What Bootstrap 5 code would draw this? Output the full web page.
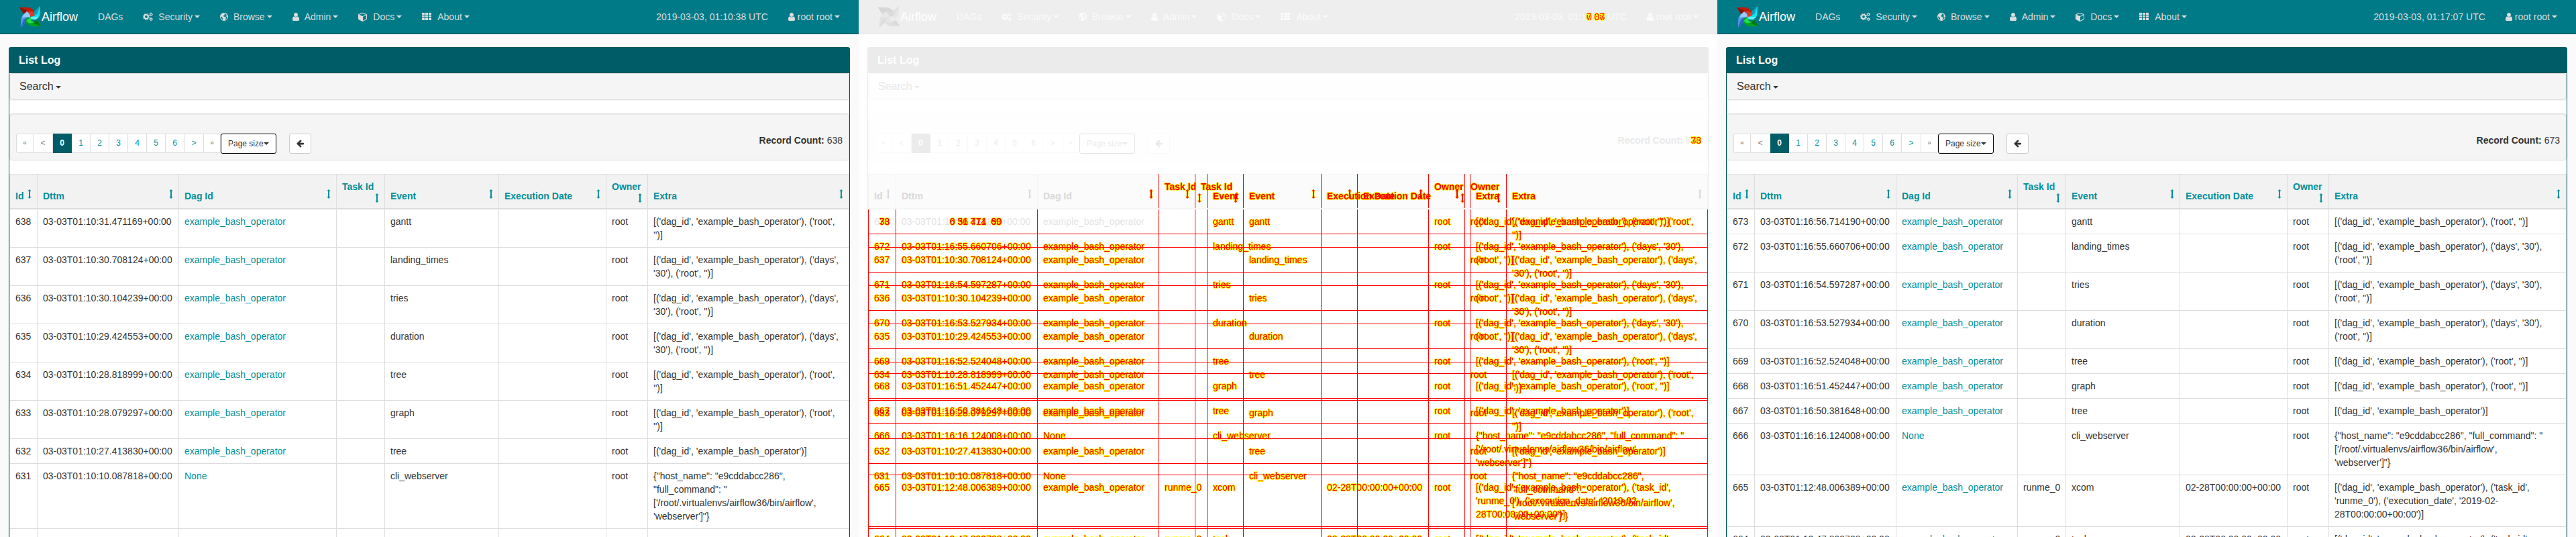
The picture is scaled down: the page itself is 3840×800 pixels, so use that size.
<!DOCTYPE html>
<html lang="en">
<head>
<meta charset="utf-8">
<meta name="viewport" content="width=device-width, initial-scale=1">
<title>Airflow - List Log comparison</title>
<link rel="stylesheet" href="https://cdn.jsdelivr.net/npm/bootstrap@5.3.0/dist/css/bootstrap.min.css">
<style>
  body { font-family: "Liberation Sans", Arial, sans-serif; font-size: 14px; line-height: 20px; color: #333; }
  a { text-decoration: none; }

  /* One palette per pane; the comparison pane is a washed-out copy */
  .pane {
    --page: #fafafa; --nav-bg: #007a87; --nav-line: #00505a; --nav-ink: #dddddd;
    --head: #005c66; --panel: #ffffff; --soft: #f5f5f5; --soft-line: #dddddd; --th: #f2f2f2;
    --ink: #333333; --accent: #018f9c; --muted: #777777; --edge: #000000; --btn-line: #cccccc; --shade: rgba(0,0,0,.05);
    flex: 1 1 0; min-width: 0; background: var(--page); color: var(--ink);
  }
  .pane-diff {
    --page: #fefefe; --nav-bg: #eeeeee; --nav-line: #e9e9e9; --nav-ink: #fbfbfb;
    --head: #ebebeb; --soft: #fefefe; --soft-line: #fafafa; --th: #fdfdfd;
    --ink: #e9e9e9; --accent: #ececec; --muted: #f1f1f1; --edge: #e3e3e3; --btn-line: #f9f9f9; --shade: transparent;
  }

  .topbar { background: var(--nav-bg); border-bottom: 1px solid var(--nav-line); height: 51px; padding: 0 13px; }
  .topbar a { color: var(--nav-ink); padding: 0 15px; white-space: nowrap; display: flex; align-items: center; }
  .topbar a.brand { color: #fff; font-size: 18px; }
  .topbar a svg { margin-right: 8px; }
  .topbar a.brand svg { margin-right: 0; }
  .topbar a.account svg { margin-right: 4px; }
  .pane-diff .brand svg { filter: grayscale(1); opacity: .12; }
  .tri { display: inline-block; border: 4px solid transparent; border-top-color: currentColor; border-bottom: 0; margin-left: 3px; vertical-align: middle; }
  svg { fill: currentColor; flex: none; }

  .panel { margin: 19px 13px; background: var(--panel); border: 1px solid var(--head); border-top: 0; border-radius: 4px; }
  .panel-head { background: var(--head); color: #fff; font-size: 16px; font-weight: 700; padding: 10px 15px 9px; margin: 0 -1px; border-radius: 4px 4px 0 0; }
  .search { background: var(--soft); border: 1px solid var(--soft-line); border-radius: 4px; box-shadow: 0 1px 1px var(--shade); font-size: 16px; padding: 9px 14px; margin-bottom: 20px; }
  .search button { border: 0; background: none; padding: 0; color: inherit; display: block; line-height: 20px; }
  .tools { background: var(--soft); border: 1px solid var(--soft-line); border-radius: 4px; box-shadow: inset 0 1px 1px var(--shade); padding: 29px 9px 9px; margin-bottom: 20px; height: 70px; }
  .pagination { --bs-pagination-bg: #fff; font-size: 12px; }
  .pagination .page-link { width: 28px; height: 29px; padding: 0; line-height: 26px; text-align: center; font-size: 12px; border: 1px solid var(--soft-line); border-radius: 0; color: var(--accent); background: #fff; border-left-width: 0; }
  .pagination .turn { font-size: 10px; width: 25px; color: var(--muted); }
  .pagination .step { width: 29px; }
  .pagination li:first-child .page-link { width: 26px; border-left-width: 1px; border-radius: 3px 0 0 3px; }
  .pagination li:last-child .page-link { border-radius: 0 3px 3px 0; }
  .pagination .off { color: var(--muted); }
  .pagination .on { background: var(--head); border-color: var(--head); color: #fff; font-weight: 700; }
  .tool-btn { height: 30px; font-size: 12px; line-height: 18px; padding: 5px 10px; border: 1px solid var(--btn-line); border-radius: 3px; background: #fff; color: var(--ink); display: flex; align-items: center; }
  .tool-btn .tri { margin-left: 0; }
  .tool-btn.sizes { border-color: var(--edge); }
  .tool-btn.back { margin-left: 19px; }

  .log { table-layout: fixed; width: 100%; margin: 0; border-color: var(--soft-line); --bs-table-bg: transparent; --bs-table-color: inherit; color: inherit; }
  .log > :not(caption) > * > * { padding: 8px; box-shadow: none; background: none; color: inherit; vertical-align: top; }
  .log > thead > tr { background: var(--th); border-bottom: 2px solid var(--soft-line); }
  .log > thead > tr > th { vertical-align: bottom; }
  .log a { color: var(--accent); }
  .log th a { display: flex; justify-content: space-between; align-items: flex-start; }
  .log th a.tall { flex-direction: column; height: 34px; }
  .log th a.tall svg { align-self: flex-end; }
  .c-id { width: 41px; } .c-dttm { width: 211px; } .c-dag { width: 235px; } .c-dag-narrow { width: 181px; }
  .c-task { width: 72px; } .c-event { width: 170px; } .c-exec { width: 160px; } .c-owner { width: 62px; }
  .keep { white-space: nowrap; }

  /* Comparison: both tables share one grid cell, differences in red */
  .stack { display: grid; }
  .stack > table { grid-area: 1 / 1; align-self: start; }
  .stack > table + table { mix-blend-mode: multiply; }
  .stack > table > tbody > tr > td, .stack td a, .stack th a.hot, .clash { color: #f00; text-shadow: 1px 0 #ff0, -1px 0 #ff0, 0 1px #ff0, 0 -1px #ff0; }
  .stack tbody .same, .stack tbody a.same { color: #f1f1f1; text-shadow: none; }
  .stack svg.hot { fill: #f00; stroke: #ff0; stroke-width: 1; paint-order: stroke; }
  .stack svg.plain { fill: var(--accent); }
  .stack tbody tr { border-color: #f00; }
  .stack tr > :nth-child(n+3):not(:last-child) { border-right-color: #f00; }
  .stack tr > :nth-child(n+4) { border-left-color: #f00; }
  .clash { display: inline-grid; }
  .clash > span { grid-area: 1 / 1; }
</style>
</head>
<body class="vh-100 overflow-hidden">
<main class="d-flex align-items-stretch min-vh-100" id="panes"></main>

<script src="https://cdn.jsdelivr.net/npm/bootstrap@5.3.0/dist/js/bootstrap.bundle.min.js"></script>
<script>
const icon = {
  logo: `<svg width="34" height="34" viewBox="0 0 102 102" aria-hidden="true">
    <path fill="#c01c08" d="M2 8L50 10 70 24 74 46 54 52 48 34 34 32 22 38Z"/><path fill="#84170a" d="M2 8L36 22 30 36 22 38Z"/><path fill="#df3a26" d="M34 32Q56 20 70 34L74 46 54 52 48 34Z"/>
    <path fill="#11e1ee" d="M96 2L94 46 76 64 56 62 52 52 72 46 70 28Z"/><path fill="#0b9fbd" d="M96 2L82 38 70 44 70 28Z"/><path fill="#5ff3f6" d="M52 52L92 50 76 64 56 62Z"/>
    <path fill="#00a51e" d="M101 94L56 94 32 78 30 58 52 52 56 70 72 72 82 66Z"/><path fill="#007512" d="M101 94L66 80 72 72 82 66Z"/><path fill="#22e04a" d="M52 52L56 70 70 76 48 80 34 70Z"/>
    <path fill="#5793ea" d="M8 100L10 58 20 40 36 28 46 36 52 52 34 56 32 76Z"/><path fill="#2f62bf" d="M8 100L22 64 34 56 32 76Z"/><path fill="#9cc7f7" d="M20 44L36 28 48 38 52 52 30 52 14 56Z"/></svg>`,
  cogs: `<svg width="15" height="14" viewBox="0 0 15 14" fill="none" stroke="currentColor" style="fill:none" aria-hidden="true">
    <circle cx="5" cy="7" r="2.9" stroke-width="2"/><circle cx="5" cy="7" r="4.3" stroke-width="1.4" stroke-dasharray="1.7 1.677"/>
    <circle cx="12.2" cy="3.4" r="1.5" stroke-width="1.1"/><circle cx="12.2" cy="3.4" r="2.3" stroke-width=".8" stroke-dasharray="1 .8"/>
    <circle cx="12.2" cy="10.6" r="1.5" stroke-width="1.1"/><circle cx="12.2" cy="10.6" r="2.3" stroke-width=".8" stroke-dasharray="1 .8"/></svg>`,
  globe: `<svg width="12" height="14" viewBox="0 0 12 14" aria-hidden="true"><path fill-rule="evenodd" d="M6 1a6 6 0 1 1 0 12A6 6 0 0 1 6 1ZM7 2.2 6.2 3.2 7.3 3.6 6.4 4.8 5 5.6 5.2 6.6 6.6 6.7 7.6 7.8 9.3 8.3 8.4 10 7.4 11.8Q10 11 10.9 8.2L9.6 6.6 8.3 6.3 8.8 5.2 10.4 5.3Q9.4 2.8 7 2.2ZM1.2 6.4Q.9 10 4.2 11.6L4.5 10 3.3 8.7 3.6 7.6 2.4 7Z"/></svg>`,
  user: `<svg width="10" height="14" viewBox="256 0 1280 1792" aria-hidden="true"><path d="M1536 1399q0 109-62.5 187t-150.5 78h-854q-88 0-150.5-78t-62.5-187q0-85 8.5-160.5t31.5-152 58.5-131 94-89 134.5-34.5q131 128 313 128t313-128q76 0 134.5 34.5t94 89 58.5 131 31.5 152 8.5 160.5zm-256-887q0 159-112.5 271.5t-271.5 112.5-271.5-112.5-112.5-271.5 112.5-271.5 271.5-112.5 271.5 112.5 112.5 271.5z"/></svg>`,
  cube: `<svg width="14" height="14" viewBox="0 0 1792 1792" aria-hidden="true"><path d="M896 1629l640-349v-636l-640 233v752zm-64-865l698-254-698-254-698 254zm832-252v768q0 35-18 65t-49 47l-704 384q-28 16-61 16t-61-16l-704-384q-31-17-49-47t-18-65v-768q0-40 23-73t61-47l704-256q22-8 44-8t44 8l704 256q38 14 61 47t23 73z"/></svg>`,
  grid: `<svg width="15" height="14" viewBox="0 0 15 14" aria-hidden="true"><path d="M0 1h4v3H0zM5 1h4v3H5zM10 1h4v3h-4zM0 5h4v3H0zM5 5h4v3H5zM10 5h4v3h-4zM0 9h4v3H0zM5 9h4v3H5zM10 9h4v3h-4z"/></svg>`,
  left: `<svg width="11" height="12" viewBox="128 128 1536 1664" aria-hidden="true"><path d="M1664 896v128q0 53-32.5 90.5t-84.5 37.5h-704l293 294q38 36 38 90t-38 90l-75 76q-37 37-90 37-52 0-91-37l-651-652q-37-37-37-90 0-52 37-91l651-650q38-38 91-38 52 0 90 38l75 74q38 38 38 91t-38 91l-293 293h704q52 0 84.5 37.5t32.5 90.5z"/></svg>`,
  sort: cls => `<svg class="${cls}" width="6" height="14" viewBox="0 0 6 14" aria-hidden="true"><path d="M3 0 5.8 3H4v8h1.8L3 14 .2 11H2V3H.2Z"/></svg>`
};
const tri = '<span class="tri"></span>';
const dag = "[('dag_id', 'example_bash_operator')";
const ebo = 'example_bash_operator';
const root = dag + ", ('root', '')]", days = dag + ", ('days', '30'), ('root', '')]";
const web = `{"host_name": "e9cddabcc286", "full_command": "<wbr><span class="keep">['/root/.virtualenvs/airflow36/bin/airflow',</span><br>'webserver']"}`;
const task = dag + `, ('task_id', 'runme_0'), ('execution_date', <span class="keep">'2019-02-</span><wbr><span class="keep">28T00:00:00+00:00')]</span>`;
const exec = '02-28T00:00:00+00:00';

// id, time, dag, task, event, execution date, extra
const before = [
  ['638', '03-03T01:10:31.471169+00:00', ebo, '', 'gantt', '', root],
  ['637', '03-03T01:10:30.708124+00:00', ebo, '', 'landing_times', '', days],
  ['636', '03-03T01:10:30.104239+00:00', ebo, '', 'tries', '', days],
  ['635', '03-03T01:10:29.424553+00:00', ebo, '', 'duration', '', days],
  ['634', '03-03T01:10:28.818999+00:00', ebo, '', 'tree', '', root],
  ['633', '03-03T01:10:28.079297+00:00', ebo, '', 'graph', '', root],
  ['632', '03-03T01:10:27.413830+00:00', ebo, '', 'tree', '', dag + ']'],
  ['631', '03-03T01:10:10.087818+00:00', 'None', '', 'cli_webserver', '', web],
  ['630', '03-03T01:10:04.006389+00:00', ebo, 'runme_0', 'xcom', exec, task]
];
const after = [
  ['673', '03-03T01:16:56.714190+00:00', ebo, '', 'gantt', '', root],
  ['672', '03-03T01:16:55.660706+00:00', ebo, '', 'landing_times', '', days],
  ['671', '03-03T01:16:54.597287+00:00', ebo, '', 'tries', '', days],
  ['670', '03-03T01:16:53.527934+00:00', ebo, '', 'duration', '', days],
  ['669', '03-03T01:16:52.524048+00:00', ebo, '', 'tree', '', root],
  ['668', '03-03T01:16:51.452447+00:00', ebo, '', 'graph', '', root],
  ['667', '03-03T01:16:50.381648+00:00', ebo, '', 'tree', '', dag + ']'],
  ['666', '03-03T01:16:16.124008+00:00', 'None', '', 'cli_webserver', '', web],
  ['665', '03-03T01:12:48.006389+00:00', ebo, 'runme_0', 'xcom', exec, task],
  ['664', '03-03T01:12:47.899708+00:00', ebo, 'runme_0', 'task', exec, task]
];

const heads = ['Id', 'Dttm', 'Dag Id', 'Task Id', 'Event', 'Execution Date', 'Owner', 'Extra'];

// Characters equal in both strings stay faint
const compare = (a, b) => [...a].map((c, i) => c === b[i] ? `<span class="same">${c}</span>` : c).join('');

function table(rows, narrow, other) {
  const th = heads.map((h, i) => {
    const tall = i === 3 || i === 6 ? 'tall' : '';
    const hot = other && i > 2 ? 'hot' : '';
    const arrow = other && i > 1 && i < 7 ? 'hot' : 'plain';
    return `<th scope="col"><a href="#" class="${tall} ${hot}"><span>${h}</span>${icon.sort(arrow)}</a></th>`;
  }).join('');
  const body = rows.map((r, n) => {
    const first = other && n === 0;
    const id = first ? compare(r[0], other[0][0]) : r[0];
    const dttm = first ? compare(r[1], other[0][1]) : r[1];
    return `<tr><td>${id}</td><td>${dttm}</td><td><a href="#" class="${first ? 'same' : ''}">${r[2]}</a></td><td>${r[3]}</td><td>${r[4]}</td><td>${r[5]}</td><td>root</td><td>${r[6]}</td></tr>`;
  }).join('');
  return `<table class="table table-bordered log">
    <colgroup><col class="c-id"><col class="c-dttm"><col class="${narrow ? 'c-dag-narrow' : 'c-dag'}"><col class="c-task"><col class="c-event"><col class="c-exec"><col class="c-owner"><col></colgroup>
    <thead><tr>${th}</tr></thead><tbody>${body}</tbody></table>`;
}

const pages = [0, 1, 2, 3, 4, 5, 6].map(n =>
  `<li class="page-item"><a class="page-link ms-0 ${n ? '' : 'on'}" href="#">${n}</a></li>`).join('');

function pane(cls, clock, count, tables) {
  return `<section class="pane ${cls}">
    <nav class="topbar d-flex align-items-center">
      <a class="brand" href="#">${icon.logo}Airflow</a>
      <a href="#">DAGs</a>
      <a href="#">${icon.cogs}Security${tri}</a>
      <a href="#">${icon.globe}Browse${tri}</a>
      <a href="#">${icon.user}Admin${tri}</a>
      <a href="#">${icon.cube}Docs${tri}</a>
      <a href="#">${icon.grid}About${tri}</a>
      <a class="ms-auto" href="#"><span>${clock}</span></a>
      <a class="account" href="#">${icon.user}root root${tri}</a>
    </nav>
    <div class="panel">
      <div class="panel-head">List Log</div>
      <div class="search"><button type="button">Search${tri}</button></div>
      <div class="tools d-flex align-items-start">
        <ul class="pagination mb-0">
          <li class="page-item"><span class="page-link ms-0 turn">«</span></li>
          <li class="page-item"><span class="page-link ms-0 step off">&lt;</span></li>
          ${pages}
          <li class="page-item"><a class="page-link ms-0 step" href="#">&gt;</a></li>
          <li class="page-item"><span class="page-link ms-0 turn">»</span></li>
        </ul>
        <button type="button" class="tool-btn sizes">Page size${tri}</button>
        <button type="button" class="tool-btn back" aria-label="Back">${icon.left}</button>
        <div class="ms-auto"><strong>Record Count:</strong> ${count}</div>
      </div>
      ${tables}
    </div>
  </section>`;
}

const clash = (a, b) => `<span class="clash"><span>${a}</span><span>${b}</span></span>`;

document.getElementById('panes').innerHTML =
  pane('', '2019-03-03, 01:10:38 UTC', '638', table(before, false)) +
  pane('pane-diff', `2019-03-03, 01:1${clash('0', '7')}:${clash('38', '07')} UTC`, `6${clash('38', '73')}`,
    `<div class="stack">${table(before, false, after)}${table(after, true, before)}</div>`) +
  pane('', '2019-03-03, 01:17:07 UTC', '673', table(after, true));
</script>
</body>
</html>
